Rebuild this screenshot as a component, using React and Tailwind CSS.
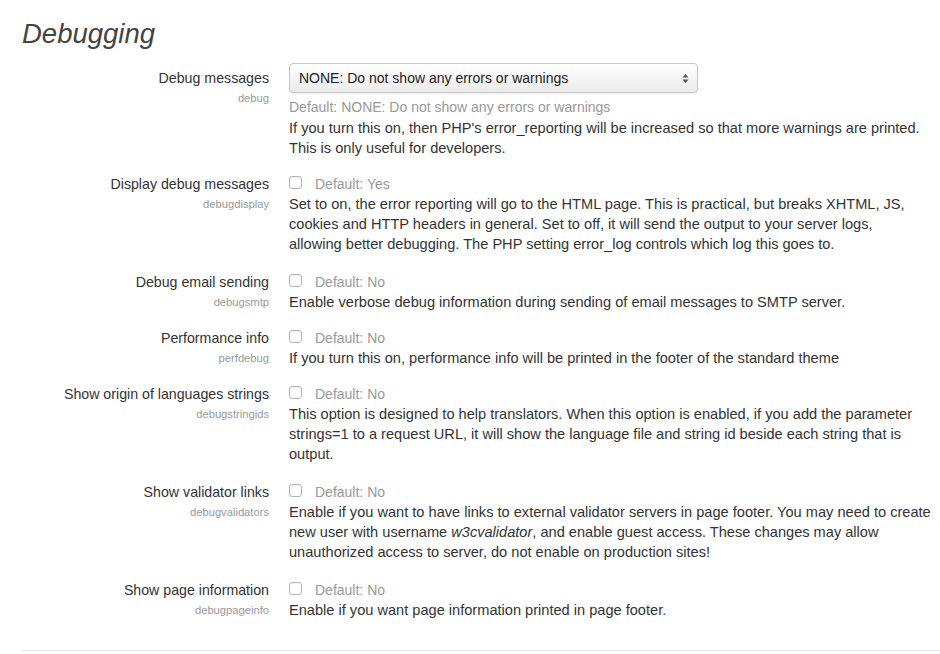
import React from 'react';

const settings = [
  {
    label: 'Debug messages',
    name: 'debug',
    type: 'select',
    def: 'Default: NONE: Do not show any errors or warnings',
    desc: [
      "If you turn this on, then PHP's error_reporting will be increased so that more warnings are printed.",
      'This is only useful for developers.',
    ],
  },
  {
    label: 'Display debug messages',
    name: 'debugdisplay',
    def: 'Default: Yes',
    desc: [
      'Set to on, the error reporting will go to the HTML page. This is practical, but breaks XHTML, JS,',
      'cookies and HTTP headers in general. Set to off, it will send the output to your server logs,',
      'allowing better debugging. The PHP setting error_log controls which log this goes to.',
    ],
  },
  {
    label: 'Debug email sending',
    name: 'debugsmtp',
    def: 'Default: No',
    desc: ['Enable verbose debug information during sending of email messages to SMTP server.'],
  },
  {
    label: 'Performance info',
    name: 'perfdebug',
    def: 'Default: No',
    desc: ['If you turn this on, performance info will be printed in the footer of the standard theme'],
  },
  {
    label: 'Show origin of languages strings',
    name: 'debugstringids',
    def: 'Default: No',
    desc: [
      'This option is designed to help translators. When this option is enabled, if you add the parameter',
      'strings=1 to a request URL, it will show the language file and string id beside each string that is',
      'output.',
    ],
  },
  {
    label: 'Show validator links',
    name: 'debugvalidators',
    def: 'Default: No',
    desc: [
      'Enable if you want to have links to external validator servers in page footer. You may need to create',
      <>new user with username <em>w3cvalidator</em>, and enable guest access. These changes may allow</>,
      'unauthorized access to server, do not enable on production sites!',
    ],
  },
  {
    label: 'Show page information',
    name: 'debugpageinfo',
    def: 'Default: No',
    desc: ['Enable if you want page information printed in page footer.'],
  },
];

function Row({ s }) {
  const tall = s.desc.length > 2;
  return (
    <div className={`flex ${tall ? 'mb-[18px]' : 'mb-4'}`}>
      {/* label column */}
      <div className="w-[247px] shrink-0 text-right">
        <div className={`text-[14.2px] leading-5 text-[#333] ${s.type === 'select' ? 'mt-[5px]' : ''}`}>{s.label}</div>
        <div className="text-[11.2px] leading-5 text-[#999]">{s.name}</div>
      </div>
      {/* content column */}
      <div className="ml-5 flex-1">
        {s.type === 'select' ? (
          <>
            <div className="w-[409px] h-[30px] rounded-[4px] border border-[#c8c8c8] bg-gradient-to-b from-white to-[#ebebeb] shadow-[0_1px_1px_rgba(0,0,0,0.08)] flex items-center justify-between pl-[9px] pr-[8px]">
              <span className="text-[14px] text-[#222]">NONE: Do not show any errors or warnings</span>
              <svg width="7" height="11" viewBox="0 0 7 11">
                <path d="M3.5 1 L6.5 4.5 H0.5 Z" fill="#555" />
                <path d="M3.5 10 L6.5 6.5 H0.5 Z" fill="#555" />
              </svg>
            </div>
            <div className="mt-[4px] text-[14px] leading-5 text-[#999]">{s.def}</div>
          </>
        ) : (
          <div className="flex items-center h-5">
            <span className="w-[13px] h-[13px] rounded-[3px] border border-[#b5b5b5] bg-white shadow-[inset_0_1px_1px_rgba(0,0,0,0.06)] -mt-1" />
            <span className="ml-[13px] text-[14px] text-[#999]">{s.def}</span>
          </div>
        )}
        <div className={`text-[14.6px] leading-5 text-[#333] ${s.type === 'select' ? 'pt-px' : ''}`}>
          {s.desc.map((line, i) => (
            <div key={i} className="whitespace-nowrap">{line}</div>
          ))}
        </div>
      </div>
    </div>
  );
}

export default function App() {
  return (
    <div className="w-[940px] h-[654px] bg-white overflow-hidden" style={{ fontFamily: '"Liberation Sans", Arial, sans-serif' }}>
      <div className="pl-[22px]">
        <h2 className="pt-[16px] h-[63px] text-[27.5px] leading-[36px] italic text-[#444]">Debugging</h2>
        {settings.map((s) => (
          <Row key={s.name} s={s} />
        ))}
        <div className="border-t border-[#e5e5e5] mt-[30px]" />
      </div>
    </div>
  );
}
